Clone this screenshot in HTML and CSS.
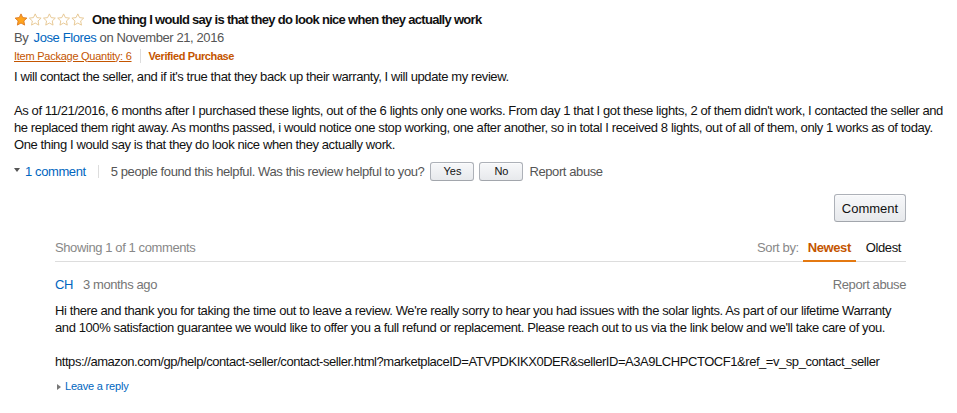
FILE: index.html
```html
<!DOCTYPE html>
<html>
<head>
<meta charset="utf-8">
<link rel="stylesheet" href="styles.css">
</head>
<body>
<div class="review">
  <div class="title-row">
    <svg class="stars" width="72" height="13" viewBox="0 0 72 13">
      <defs>
        <path id="star" d="M6.5 0.4 L8.26 4.1 L12.4 4.6 L9.35 7.45 L10.15 11.6 L6.5 9.5 L2.85 11.6 L3.65 7.45 L0.6 4.6 L4.74 4.1 Z"/>
      </defs>
      <use href="#star" x="0.5" y="0.5" fill="#ffa41c" stroke="#de7921" stroke-width="0.9"/>
      <use href="#star" x="14.7" y="0.5" fill="#fff" stroke="#e5c48c" stroke-width="0.9"/>
      <use href="#star" x="28.9" y="0.5" fill="#fff" stroke="#e5c48c" stroke-width="0.9"/>
      <use href="#star" x="43.1" y="0.5" fill="#fff" stroke="#e5c48c" stroke-width="0.9"/>
      <use href="#star" x="57.3" y="0.5" fill="#fff" stroke="#e5c48c" stroke-width="0.9"/>
    </svg>
    <span class="title">One thing I would say is that they do look nice when they actually work</span>
  </div>
  <div class="byline">By <a class="link author">Jose Flores</a> on November 21, 2016</div>
  <div class="meta">
    <a class="format">Item Package Quantity: 6</a>
    <span class="sep"></span>
    <span class="verified">Verified Purchase</span>
  </div>
  <div class="body">
    <p>I will contact the seller, and if it's true that they back up their warranty, I will update my review.</p>
    <p>As of 11/21/2016, 6 months after I purchased these lights, out of the 6 lights only one works. From day 1 that I got these lights, 2 of them didn't work, I contacted the seller and he replaced them right away. As months passed, i would notice one stop working, one after another, so in total I received 8 lights, out of all of them, only 1 works as of today. One thing I would say is that they do look nice when they actually work.</p>
  </div>
  <div class="actions">
    <span class="caret-down"></span>
    <a class="link">1 comment</a>
    <span class="sep tall"></span>
    <span class="helpful">5 people found this helpful. Was this review helpful to you?</span>
    <button class="btn small">Yes</button>
    <button class="btn small">No</button>
    <span class="report">Report abuse</span>
  </div>

  <div class="comment-area">
    <div class="comment-btn-row">
      <button class="btn big">Comment</button>
    </div>
    <div class="comments-header">
      <span class="showing">Showing 1 of 1 comments</span>
      <div class="sort">
        <span class="sort-label">Sort by:</span>
        <span class="tab active">Newest</span>
        <span class="tab">Oldest</span>
      </div>
    </div>
    <div class="comment">
      <div class="comment-head">
        <div><a class="link">CH</a><span class="ago">3 months ago</span></div>
        <span class="report-c">Report abuse</span>
      </div>
      <div class="comment-text">
        <p>Hi there and thank you for taking the time out to leave a review. We're really sorry to hear you had issues with the solar lights. As part of our lifetime Warranty and 100% satisfaction guarantee we would like to offer you a full refund or replacement. Please reach out to us via the link below and we'll take care of you.</p>
        <p class="url">https://amazon.com/gp/help/contact-seller/contact-seller.html?marketplaceID=ATVPDKIKX0DER&amp;sellerID=A3A9LCHPCTOCF1&amp;ref_=v_sp_contact_seller</p>
      </div>
      <div class="reply"><span class="caret-right"></span><a class="link">Leave a reply</a></div>
    </div>
  </div>
</div>
</body>
</html>
```

FILE: styles.css
```css
html, body {
  margin: 0;
  padding: 0;
  background: #fff;
}
body {
  font-family: "Liberation Sans", Arial, sans-serif;
  font-size: 13px;
  letter-spacing: -0.4px;
  color: #111;
}
p { margin: 0; }
a { cursor: pointer; }
.link {
  color: #0066c0;
  text-decoration: none;
}
.review {
  padding: 10px 7px 0 14px;
}
.title-row {
  display: flex;
  align-items: center;
  height: 19px;
}
.stars {
  display: block;
}
.title {
  font-weight: bold;
  margin-left: 6px;
  line-height: 19px;
  letter-spacing: -0.7px;
}
.byline {
  line-height: 17px;
  color: #555;
}
.byline .author {
  margin-left: 2px;
}
.meta {
  display: flex;
  align-items: center;
  height: 19px;
  font-size: 11px;
  letter-spacing: -0.25px;
}
.format {
  color: #c45500;
  text-decoration: underline;
}
.sep {
  display: inline-block;
  width: 1px;
  height: 14px;
  background: #ddd;
  margin: 0 8px;
}
.verified {
  color: #c45500;
  font-weight: bold;
  letter-spacing: -0.4px;
}
.body {
  margin-top: 3px;
  line-height: 17px;
}
.body p + p,
.comment-text p + p {
  margin-top: 17px;
}
.actions {
  display: flex;
  align-items: center;
  margin-top: 8px;
  height: 20px;
  color: #555;
}
.caret-down {
  width: 0;
  height: 0;
  border-left: 3px solid transparent;
  border-right: 3px solid transparent;
  border-top: 4px solid #555;
  margin: 0 5px 3px 0;
}
.sep.tall {
  height: 13px;
  margin: 0 12px 0 12px;
}
.helpful {
  margin-right: 6px;
}
.btn {
  font-family: "Liberation Sans", Arial, sans-serif;
  color: #111;
  background: linear-gradient(to bottom, #f7f8fa, #e7e9ec);
  border: 1px solid #adb1b8;
  border-bottom-color: #a2a6ac;
  border-radius: 3px;
  box-shadow: inset 0 1px 0 rgba(255,255,255,.6);
  padding: 0;
  cursor: pointer;
}
.btn.small {
  width: 44px;
  height: 19px;
  font-size: 11px;
  margin-right: 5px;
  line-height: 17px;
}
.report {
  margin-left: 1px;
}
.comment-area {
  margin: 0 44px 0 41px;
}
.comment-btn-row {
  display: flex;
  justify-content: flex-end;
  margin-top: 13px;
}
.btn.big {
  width: 72px;
  height: 28px;
  font-size: 13px;
}
.comments-header {
  display: flex;
  justify-content: space-between;
  height: 26px;
  margin-top: 13px;
  border-bottom: 1px solid #ddd;
  line-height: 26px;
}
.showing {
  color: #888;
}
.sort {
  display: flex;
  height: 27px;
}
.sort-label {
  color: #888;
  margin-right: 4px;
}
.tab {
  box-sizing: border-box;
  height: 27px;
  line-height: 25px;
  padding: 0 5px;
  color: #111;
}
.tab + .tab {
  margin-left: 5px;
}
.tab.active {
  color: #c45500;
  font-weight: bold;
  border-bottom: 2px solid #e47911;
}
.comment-head {
  display: flex;
  justify-content: space-between;
  margin-top: 14px;
  line-height: 17px;
}
.ago {
  color: #767676;
  margin-left: 10px;
}
.report-c {
  color: #767676;
}
.comment-text {
  margin-top: 9px;
  line-height: 17px;
}
.url {
  white-space: nowrap;
  letter-spacing: -0.45px;
}
.reply {
  display: flex;
  align-items: center;
  margin-top: 8px;
  line-height: 17px;
  font-size: 11px;
  letter-spacing: -0.2px;
}
.caret-right {
  width: 0;
  height: 0;
  border-top: 3px solid transparent;
  border-bottom: 3px solid transparent;
  border-left: 4px solid #777;
  margin: 0 4px 0 2px;
}
```
